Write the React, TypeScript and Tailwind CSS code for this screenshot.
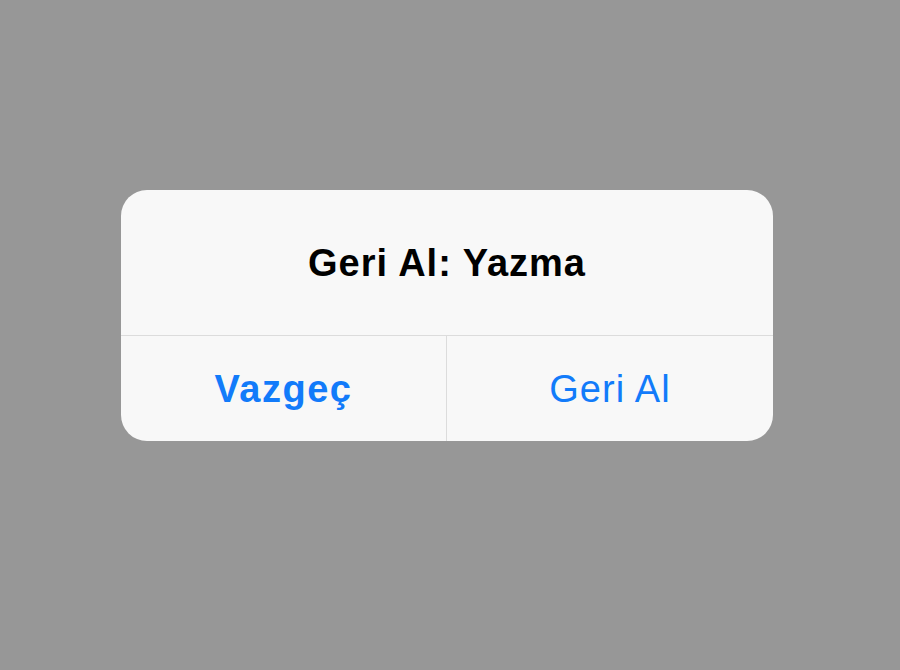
export default function App() {
  return (
    <div className="w-[900px] h-[670px] bg-[#979797] flex items-start justify-start pl-[121px] pt-[190px]" style={{ fontFamily: '"Liberation Sans", Arial, sans-serif' }}>
      <div className="w-[652px] h-[251px] bg-[#f8f8f8] rounded-[26px] flex flex-col overflow-hidden">
        <div className="h-[146px] flex items-center justify-center border-b border-[#dcdcdc]">
          <span className="text-[38px] font-bold text-black leading-none tracking-[1px]">Geri Al: Yazma</span>
        </div>
        <div className="flex-1 flex">
          <button className="w-[326px] flex items-center justify-center border-r border-[#dcdcdc] text-[38px] font-bold text-[#127bfa] leading-none tracking-[1.5px]">
            Vazgeç
          </button>
          <button className="flex-1 flex items-center justify-center text-[38px] text-[#127bfa] leading-none tracking-[1.1px]">
            Geri Al
          </button>
        </div>
      </div>
    </div>
  );
}
